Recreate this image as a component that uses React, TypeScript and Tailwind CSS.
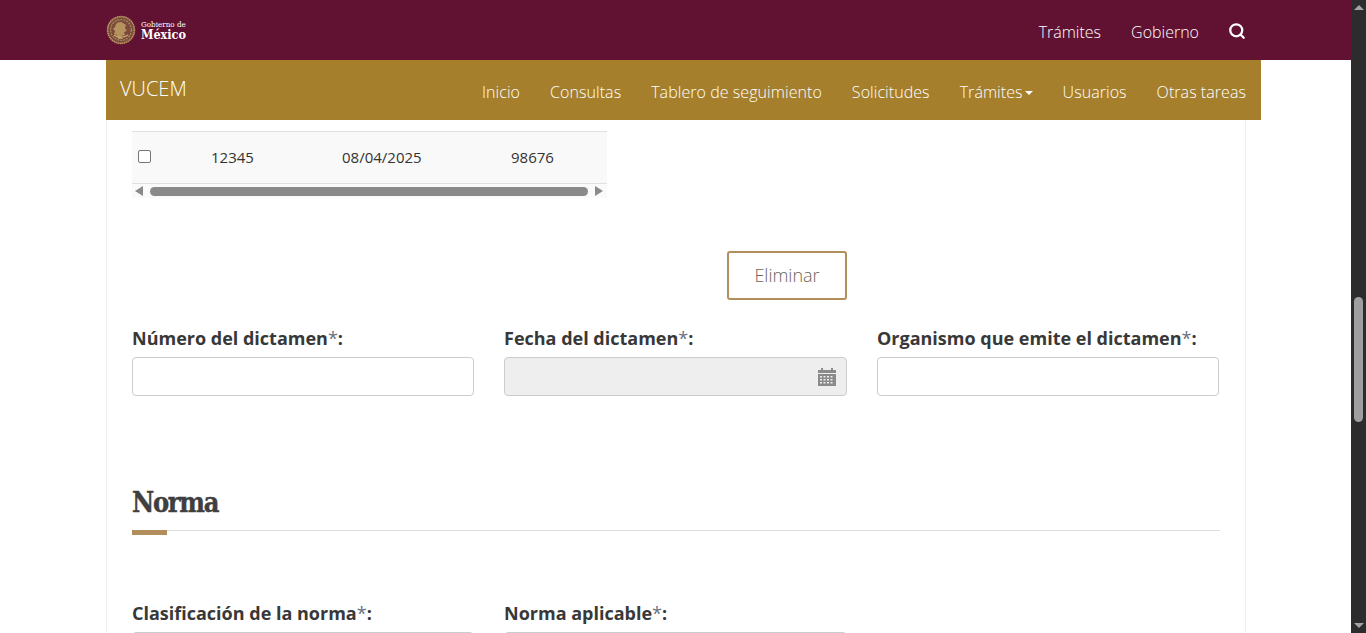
import { Search } from "lucide-react";

const navItems = ["Inicio", "Consultas", "Tablero de seguimiento", "Solicitudes", "Trámites", "Usuarios", "Otras tareas"];

const Seal = () => (
  <svg width="30" height="30" viewBox="0 0 30 30" fill="none">
    <circle cx="15" cy="15" r="14" fill="#7a4a3a" />
    <circle cx="15" cy="15" r="13.4" stroke="#c09a68" strokeWidth="1.600" strokeDasharray="1.400 0.700" />
    <circle cx="15" cy="15" r="10.400" stroke="#a9835a" strokeWidth="1.400" strokeDasharray="2 1" />
    <path d="M10 9c2-2 5-3 7-1l3 2-1 3 2 3-3 1 1 3-4 1 2 3h-5l-1-4-3-1 1-3-2-2 2-2z" fill="#b6925f" />
    <path d="M8 20c3 3 10 3 14 0" stroke="#cba978" strokeWidth="1.200" />
  </svg>
);

const Label = ({ text }: { text: string }) => (
  <label className="block text-[18px] leading-[22px] font-bold text-[#383838] whitespace-nowrap">
    {text}
    <span className="font-normal text-[#6b7280]">*</span>:
  </label>
);

const CalendarIcon = () => (
  <svg width="18" height="20" viewBox="0 0 18 20" fill="#8a8a8a">
    <path d="M0 3h3V1h2v2h8V1h2v2h3v3H0z" />
    <path fillRule="evenodd" d="M0 7h18v12H0zM2 9v1.500h2V9zm3.500 0v1.500h2V9zm3.500 0v1.500h2V9zm3.500 0v1.500h2V9zM2 12v1.500h2V12zm3.500 0v1.500h2V12zm3.500 0v1.500h2V12zm3.500 0v1.500h2V12zM2 15v1.500h2V15zm3.500 0v1.500h2V15zm3.500 0v1.500h2V15zm3.500 0v1.500h2V15z" />
  </svg>
);

export default function App() {
  return (
    <div className="flex h-[633px] overflow-hidden bg-white font-['Open_Sans',sans-serif] text-[#333333]">
      <div className="flex-1 min-w-0">
        <header className="h-[60px] bg-[#611232] pl-[106px] pr-[105px] flex items-center justify-between text-white">
          <div className="flex items-center gap-[5px]">
            <Seal />
            <div className="font-['DejaVu_Serif_Condensed','DejaVu_Serif',serif] text-white">
              <div className="text-[8px] leading-[8px] mt-[1px] whitespace-nowrap">Gobierno de</div>
              <div className="text-[12.500px] leading-[12px] font-bold">México</div>
            </div>
          </div>
          <nav className="flex items-center gap-[30px] text-[16px] font-[350] pt-[4px]">
            <a>Trámites</a>
            <a>Gobierno</a>
            <Search size={18} strokeWidth={3} className="mb-[3px] -ml-[1px]" />
          </nav>
        </header>

        <div className="ml-[106px] w-[1155px] h-[60px] bg-[#a57f2c] text-white flex justify-between pl-[14px] pr-[15px]">
          <span className="text-[20px] leading-[58px] font-[350]">VUCEM</span>
          <nav className="flex gap-[30px] text-[16px] font-[350] tracking-[0.06px] leading-[64px] pt-[3px]">
            {navItems.map((item) => (
              <a key={item} className="flex items-center whitespace-nowrap">
                {item}
                {item === "Trámites" && (
                  <span className="ml-[2px] mt-[2px] border-x-[4px] border-t-[4px] border-x-transparent border-t-white" />
                )}
              </a>
            ))}
          </nav>
        </div>

        <main className="ml-[106px] w-[1140px] h-[513px] border-x border-[#eeeeee] pl-[25px] pr-[25px] pt-[11px]">
          <div className="w-[475px]">
            <div className="h-[53px] bg-[#f9f9f9] border-y border-[#e0e0e0] grid grid-cols-[79px_131px_169px_1fr] items-center text-[15px]">
              <span className="pl-[6px] flex items-center">
                <input type="checkbox" className="w-[13px] h-[13px] m-0 appearance-none border border-[#767676] rounded-[2px] bg-white mb-[2px]" />
              </span>
              <span>12345</span>
              <span>08/04/2025</span>
              <span>98676</span>
            </div>
            <div className="h-[14px] bg-[#fafafa] flex items-center pl-[3px] pr-[4px] gap-[7px]">
              <span className="border-y-[5px] border-r-[8px] border-y-transparent border-r-[#8a8a8a]" />
              <span className="flex-1 h-[9px] rounded-full bg-[#8a8a8a]" />
              <span className="border-y-[5px] border-l-[8px] border-y-transparent border-l-[#8a8a8a]" />
            </div>
          </div>

          <div className="mt-[53px] flex justify-end w-[715px]">
            <button className="w-[120px] h-[49px] rounded-[3px] border-2 border-[#b38e5d] bg-white text-[18px] font-light text-[#6b6558]">
              Eliminar
            </button>
          </div>

          <div className="mt-[27px] grid grid-cols-[342px_343px_342px] gap-x-[30px]">
            <div>
              <Label text="Número del dictamen" />
              <input className="mt-[8px] block w-full h-[39px] rounded-[4px] border border-[#cccccc] bg-white" />
            </div>
            <div>
              <Label text="Fecha del dictamen" />
              <div className="mt-[8px] h-[39px] rounded-[4px] border border-[#cccccc] bg-[#eeeeee] flex items-center justify-end pr-[10px]">
                <CalendarIcon />
              </div>
            </div>
            <div>
              <Label text="Organismo que emite el dictamen" />
              <input className="mt-[8px] block w-full h-[39px] rounded-[4px] border border-[#cccccc] bg-white" />
            </div>
          </div>

          <h2 className="mt-[89px] text-[27px] leading-[36px] font-bold text-[#3f3f3f] font-['DejaVu_Serif_Condensed','DejaVu_Serif',serif] tracking-[-1.300px] [-webkit-text-stroke:0.4px_#3f3f3f]">Norma</h2>
          <div className="mt-[9px] w-[1088px] h-[1px] bg-[#dddddd]">
            <div className="w-[35px] h-[5px] bg-[#b38e5d]" />
          </div>

          <div className="mt-[71px] grid grid-cols-[342px_343px] gap-x-[30px]">
            <div>
              <Label text="Clasificación de la norma" />
              <div className="mt-[8px] h-[39px] rounded-[4px] border border-[#cccccc] bg-white" />
            </div>
            <div>
              <Label text="Norma aplicable" />
              <div className="mt-[8px] h-[39px] rounded-[4px] border border-[#cccccc] bg-white" />
            </div>
          </div>
        </main>
      </div>

      <aside className="w-[15px] shrink-0 bg-[#2c2c2c] flex flex-col items-center justify-between py-[5px]">
        <span className="border-x-[5px] border-b-[5px] border-x-transparent border-b-[#a3a3a3]" />
        <div className="flex-1 w-full relative">
          <div className="absolute left-[3px] top-[287px] w-[9px] h-[125px] rounded-full bg-[#9f9f9f]" />
        </div>
        <span className="border-x-[5px] border-t-[5px] border-x-transparent border-t-[#a3a3a3]" />
      </aside>
    </div>
  );
}
